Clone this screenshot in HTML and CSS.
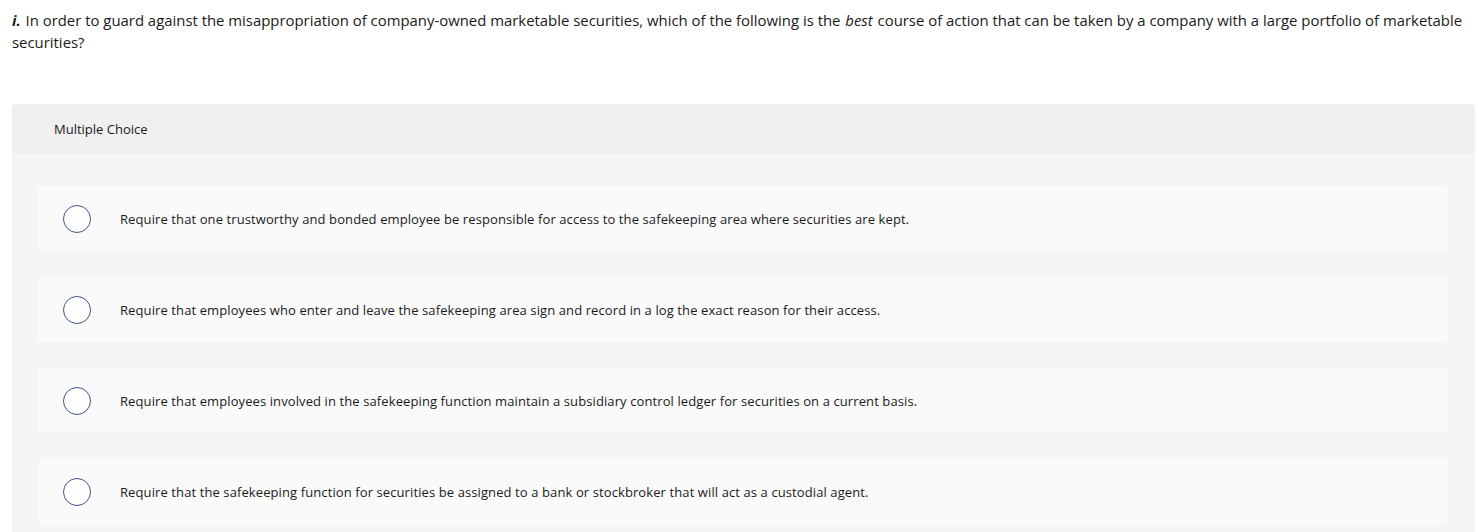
FILE: index.html
```html
<!DOCTYPE html>
<html>
<head>
<meta charset="utf-8">
<link rel="stylesheet" href="styles.css">
</head>
<body>
<div class="page">
  <p class="question"><em class="num">i.</em> In order to guard against the misappropriation of company-owned marketable securities, which of the following is the <em class="emph">best</em> course of action that can be taken by a company with a large portfolio of marketable securities?</p>
  <div class="mc">
    <div class="mc-head">Multiple Choice</div>
    <div class="mc-body">
      <label class="opt"><span class="radio"></span><span class="opt-text">Require that one trustworthy and bonded employee be responsible for access to the safekeeping area where securities are kept.</span></label>
      <label class="opt"><span class="radio"></span><span class="opt-text">Require that employees who enter and leave the safekeeping area sign and record in a log the exact reason for their access.</span></label>
      <label class="opt"><span class="radio"></span><span class="opt-text">Require that employees involved in the safekeeping function maintain a subsidiary control ledger for securities on a current basis.</span></label>
      <label class="opt"><span class="radio"></span><span class="opt-text">Require that the safekeeping function for securities be assigned to a bank or stockbroker that will act as a custodial agent.</span></label>
    </div>
  </div>
</div>
</body>
</html>
```

FILE: styles.css
```css
html, body {
  margin: 0;
  padding: 0;
  background: #ffffff;
}
.page {
  padding: 9px 3px 0 12px;
  font-family: "Open Sans", "Liberation Sans", sans-serif;
  color: #1a1a1a;
}
.question {
  margin: 0;
  font-size: 14.9px;
  line-height: 22px;
}
.question .num {
  font-weight: 700;
  display: inline-block;
  margin-right: 1px;
}
.question .emph {
  display: inline-block;
  margin: 0 1px;
}
.mc {
  margin-top: 51px;
  border-radius: 4px 4px 0 0;
  overflow: hidden;
}
.mc-head {
  background: #f0f0f0;
  height: 50px;
  display: flex;
  align-items: center;
  padding-left: 42px;
  font-size: 13px;
}
.mc-body {
  background: #f5f5f5;
  padding: 32px 27px 8px 26px;
  display: flex;
  flex-direction: column;
  gap: 26px;
}
.opt {
  background: #fafafa;
  border-radius: 4px;
  height: 65px;
  display: flex;
  align-items: center;
  padding-left: 25px;
  font-size: 13px;
  letter-spacing: 0.1px;
}
.radio {
  width: 26px;
  height: 26px;
  border: 1.5px solid #3c5587;
  border-radius: 50%;
  background: #ffffff;
  flex: none;
}
.opt-text {
  margin-left: 29px;
}
```
